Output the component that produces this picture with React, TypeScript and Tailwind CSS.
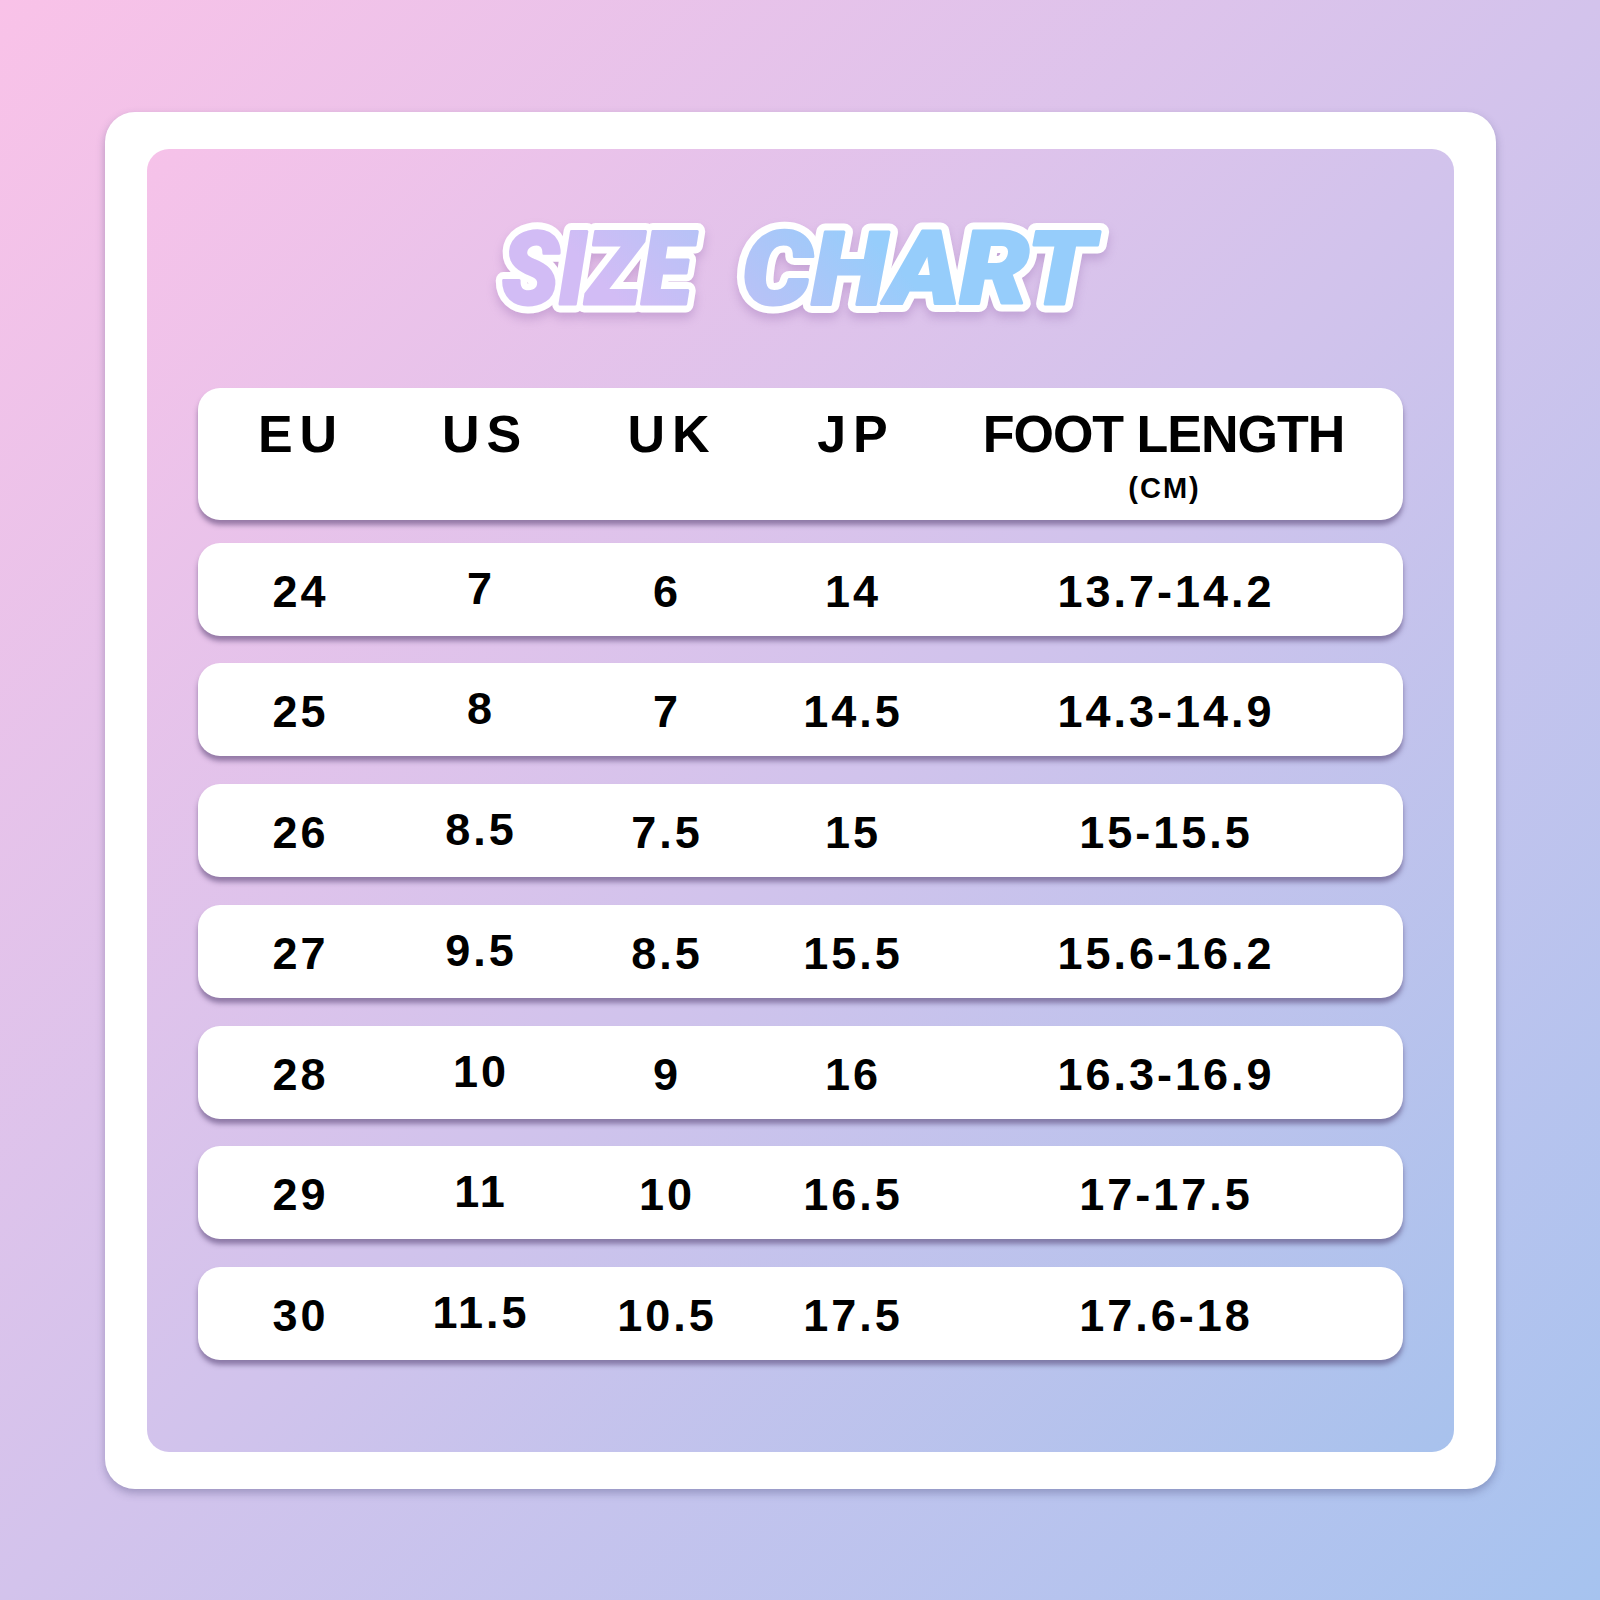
import React from "react";

const rows = [
  ["24", "7", "6", "14", "13.7-14.2"],
  ["25", "8", "7", "14.5", "14.3-14.9"],
  ["26", "8.5", "7.5", "15", "15-15.5"],
  ["27", "9.5", "8.5", "15.5", "15.6-16.2"],
  ["28", "10", "9", "16", "16.3-16.9"],
  ["29", "11", "10", "16.5", "17-17.5"],
  ["30", "11.5", "10.5", "17.5", "17.6-18"],
];

const grid = "grid grid-cols-[200px_164px_208px_164px_460px]";

const words = [
  { text: "SIZE", x: 22, len: 190 },
  { text: "CHART", x: 262, len: 352 },
];

function Title() {
  const font = {
    fontFamily: "Roboto, 'DejaVu Sans', sans-serif",
    fontWeight: 900,
    fontStyle: "italic" as const,
    fontSize: 102,
  };
  return (
    <svg
      width="640"
      height="130"
      viewBox="0 0 640 130"
      className="shrink-0 drop-shadow-[0_6px_5px_rgba(150,105,175,0.35)]"
    >
      <defs>
        <linearGradient id="title-fill" gradientUnits="userSpaceOnUse" x1="160" y1="125" x2="330" y2="-30">
          <stop offset="0" stopColor="#d2bcf5" />
          <stop offset="0.5" stopColor="#b4c3f7" />
          <stop offset="1" stopColor="#96cdfb" />
        </linearGradient>
      </defs>
      {words.map((w) => (
        <g key={w.text}>
          {/* white outline */}
          <text
            x={w.x}
            y="104"
            textLength={w.len}
            lengthAdjust="spacingAndGlyphs"
            {...font}
            fill="#ffffff"
            stroke="#ffffff"
            strokeWidth="17"
            strokeLinejoin="round"
          >
            {w.text}
          </text>
          {/* gradient fill, thickened */}
          <text
            x={w.x}
            y="104"
            textLength={w.len}
            lengthAdjust="spacingAndGlyphs"
            {...font}
            fill="url(#title-fill)"
            stroke="url(#title-fill)"
            strokeWidth="3"
            strokeLinejoin="round"
          >
            {w.text}
          </text>
        </g>
      ))}
    </svg>
  );
}

export default function App() {
  return (
    <div className="flex h-[1600px] w-[1600px] items-center justify-center bg-linear-to-br from-[#f9c2e8] via-[#d3c3ec] to-[#a6c3ef] font-['Liberation_Sans',Arial,sans-serif] text-black">
      {/* white frame */}
      <div className="h-[1377px] w-[1391px] rounded-[30px] bg-white px-[42px] py-[37px] shadow-[0_4px_8px_rgba(60,60,110,0.35)]">
        <div className="flex h-full flex-col items-center rounded-[22px] bg-linear-to-br from-[#f6c2e9] via-[#d2c3ec] to-[#a8c2ed] px-[51px] pt-[51px]">
          <Title />

          {/* header */}
          <div className={`${grid} mt-[58px] h-[132px] w-full shrink-0 rounded-[22px] bg-white pt-[20px] font-bold shadow-[0_5px_5px_rgba(70,50,100,0.5)]`}>
            <div className="pl-[7px] text-center text-[52px] leading-none tracking-[7px]">EU</div>
            <div className="pl-[11px] text-center text-[52px] leading-none tracking-[7px]">US</div>
            <div className="pl-[13px] text-center text-[52px] leading-none tracking-[7px]">UK</div>
            <div className="pl-[9px] text-center text-[52px] leading-none tracking-[7px]">JP</div>
            <div className="flex flex-col items-center">
              <span className="text-[52px] leading-none tracking-[-1px]">FOOT LENGTH</span>
              <span className="mt-[14px] pl-[2px] text-[29px] leading-none tracking-[2px]">(CM)</span>
            </div>
          </div>

          {/* rows */}
          <div className="mt-[23px] flex w-full flex-col gap-[27.75px]">
            {rows.map((r, i) => (
              <div
                key={i}
                className={`${grid} h-[93px] items-center rounded-[22px] bg-white pt-[4px] text-[45px] font-bold leading-none tracking-[3px] shadow-[0_5px_5px_rgba(70,50,100,0.5)]`}
              >
                <div className="pl-[6px] text-center">{r[0]}</div>
                <div className="mb-[6px] pl-[3px] text-center">{r[1]}</div>
                <div className="pl-[3px] text-center">{r[2]}</div>
                <div className="pl-[3px] text-center">{r[3]}</div>
                <div className="pl-[5px] text-center">{r[4]}</div>
              </div>
            ))}
          </div>
        </div>
      </div>
    </div>
  );
}
